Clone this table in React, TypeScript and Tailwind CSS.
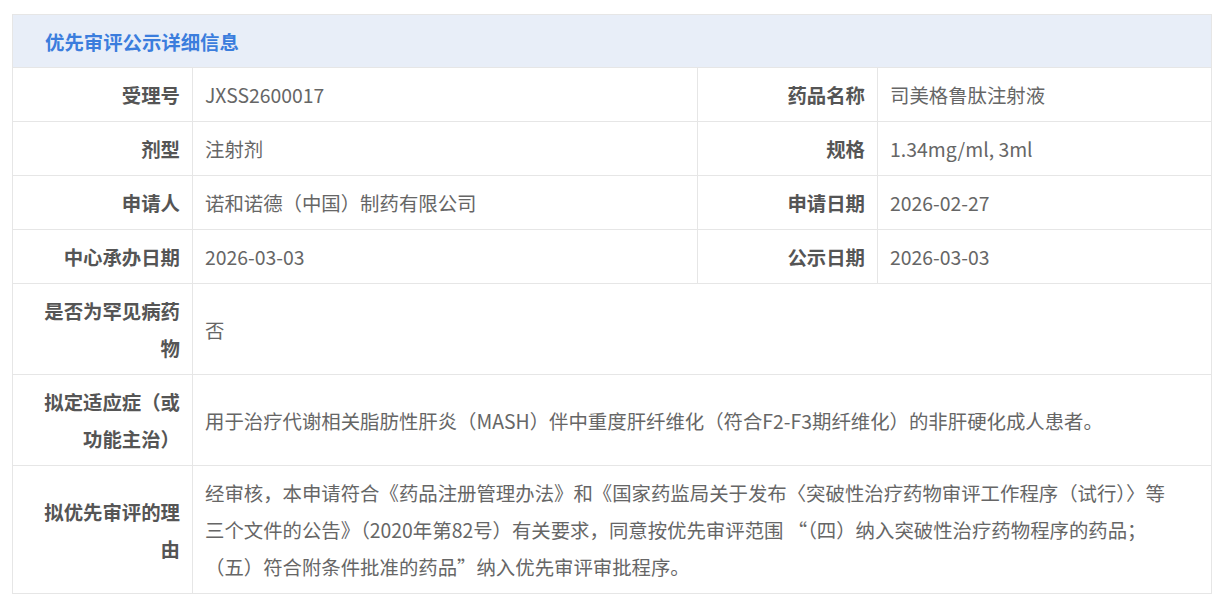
import React from 'react';

interface Pair {
  label: string;
  value: string;
}

const rows: [Pair, Pair][] = [
  [
    { label: '受理号', value: 'JXSS2600017' },
    { label: '药品名称', value: '司美格鲁肽注射液' },
  ],
  [
    { label: '剂型', value: '注射剂' },
    { label: '规格', value: '1.34mg/ml, 3ml' },
  ],
  [
    { label: '申请人', value: '诺和诺德（中国）制药有限公司' },
    { label: '申请日期', value: '2026-02-27' },
  ],
  [
    { label: '中心承办日期', value: '2026-03-03' },
    { label: '公示日期', value: '2026-03-03' },
  ],
];

const wide: Pair[] = [
  { label: '是否为罕见病药物', value: '否' },
  {
    label: '拟定适应症（或功能主治）',
    value: '用于治疗代谢相关脂肪性肝炎（MASH）伴中重度肝纤维化（符合F2-F3期纤维化）的非肝硬化成人患者。',
  },
  {
    label: '拟优先审评的理由',
    // line breaks kept as in the original page
    value:
      '经审核，本申请符合《药品注册管理办法》和《国家药监局关于发布〈突破性治疗药物审评工作程序（试行）〉等\n三个文件的公告》（2020年第82号）有关要求，同意按优先审评范围 “（四）纳入突破性治疗药物程序的药品；\n（五）符合附条件批准的药品”纳入优先审评审批程序。',
  },
];

const labelCls = 'border border-[#e6e6e6] pl-4 pr-3 py-2 text-right align-middle font-bold text-[#555]';
const valueCls = 'border border-[#e6e6e6] pl-3 pr-2 py-2 text-left align-middle text-[#666] whitespace-pre-line';

export default function App() {
  return (
    <div
      className="bg-white min-h-[600px] px-3 pt-[14px] text-[19.4px] leading-[37px]"
      style={{ fontFamily: '"Noto Sans CJK SC", "Noto Sans", sans-serif' }}
    >
      <div className="border border-[#e6e6e6]">
        <div className="bg-[#e8eef8] h-[53px] flex items-center pl-8 font-bold text-[#3b7ddd]">
          优先审评公示详细信息
        </div>
        <table className="w-full border-collapse table-fixed -m-px" style={{ width: 'calc(100% + 2px)' }}>
          <colgroup>
            <col className="w-[180px]" />
            <col className="w-[505px]" />
            <col className="w-[180px]" />
            <col />
          </colgroup>
          <tbody>
            {rows.map((r, i) => (
              <tr key={i}>
                <td className={labelCls}>{r[0].label}</td>
                <td className={valueCls}>{r[0].value}</td>
                <td className={labelCls}>{r[1].label}</td>
                <td className={valueCls}>{r[1].value}</td>
              </tr>
            ))}
            {wide.map((w, i) => (
              <tr key={i}>
                <td className={labelCls}>{w.label}</td>
                <td className={valueCls} colSpan={3}>
                  {w.value}
                </td>
              </tr>
            ))}
          </tbody>
        </table>
      </div>
    </div>
  );
}
